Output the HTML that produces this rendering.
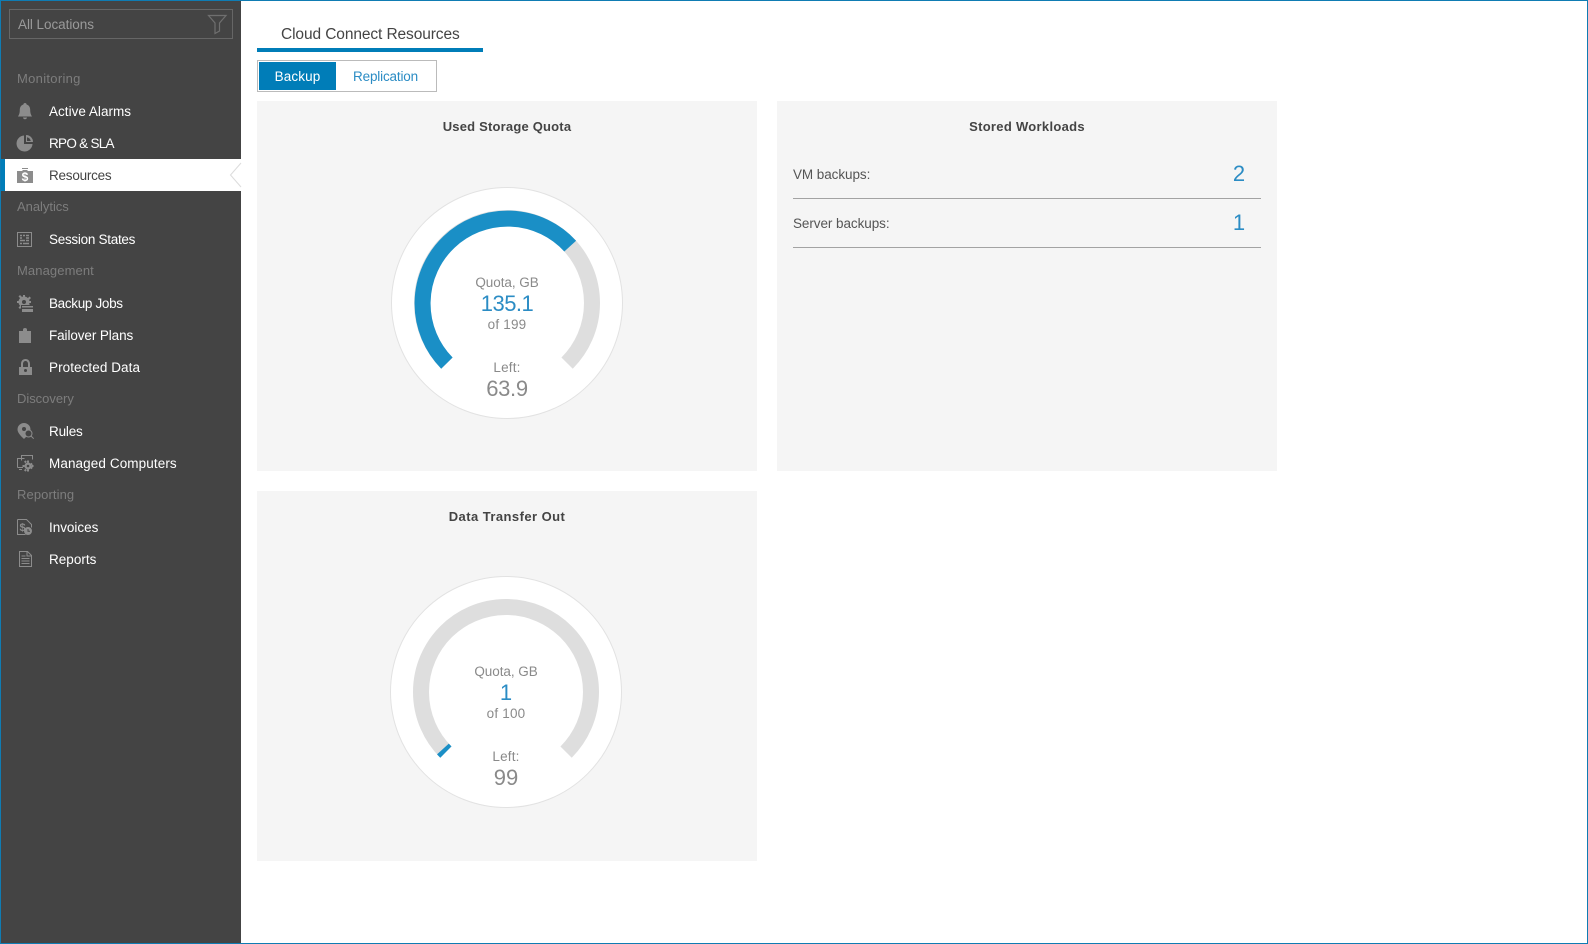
<!DOCTYPE html>
<html><head><meta charset="utf-8"><title>Cloud Connect Resources</title>
<style>
html,body{margin:0;padding:0;background:#fff}
#p{position:relative;width:1588px;height:944px;overflow:hidden;background:#fff;font-family:"Liberation Sans",sans-serif}
#p div{position:absolute;box-sizing:border-box}
.t{white-space:nowrap;line-height:20px;height:20px}
.n{left:49px;color:#fff;font-size:13.5px}
.h{left:17px;color:#7d7d7d;font-size:13px;font-weight:400}
.c{text-align:center;color:#8a8a8a;width:200px}
.b{text-align:center;width:500px;font-weight:700;font-size:13px;color:#444}
.pn{background:#f5f5f5;width:500px;height:370px}
.l{font-size:13.5px;color:#555;left:793px}
.v{font-size:22px;color:#2b8cc4;width:40px;text-align:center;left:1219px}
.r{left:793px;width:468px;height:1px;background:#a3a3a3}
svg{position:absolute;left:0;top:0}
</style></head><body>
<div id="p">
<div style="left:1px;top:1px;width:240px;height:942px;background:#444"></div>
<div style="left:9px;top:9px;width:224px;height:30px;border:1px solid #666"></div>
<div class="t" style="left:18px;top:15px;font-size:13.5px;color:#9a9a9a;letter-spacing:-.05px">All Locations</div>
<div style="left:5px;top:159px;width:236px;height:32px;background:#fff"></div>
<div style="left:0;top:159px;width:5px;height:32px;background:#007db8"></div>

<div class="pn" style="left:257px;top:101px"></div>
<div class="pn" style="left:777px;top:101px"></div>
<div class="pn" style="left:257px;top:491px"></div>

<div class="t h" style="top:69px;letter-spacing:.3px">Monitoring</div>
<div class="t n" style="top:102px;letter-spacing:.02px">Active Alarms</div>
<div class="t n" style="top:134px;letter-spacing:-.72px">RPO &amp; SLA</div>
<div class="t n" style="top:166px;color:#444;letter-spacing:-.23px">Resources</div>
<div class="t h" style="top:197px;letter-spacing:-.03px">Analytics</div>
<div class="t n" style="top:230px;letter-spacing:-.28px">Session States</div>
<div class="t h" style="top:261px;letter-spacing:.1px">Management</div>
<div class="t n" style="top:294px;letter-spacing:-.33px">Backup Jobs</div>
<div class="t n" style="top:326px;letter-spacing:-.1px">Failover Plans</div>
<div class="t n" style="top:358px;letter-spacing:.07px">Protected Data</div>
<div class="t h" style="top:389px;letter-spacing:-.03px">Discovery</div>
<div class="t n" style="top:422px;letter-spacing:-.18px">Rules</div>
<div class="t n" style="top:454px;letter-spacing:.1px">Managed Computers</div>
<div class="t h" style="top:485px;letter-spacing:.1px">Reporting</div>
<div class="t n" style="top:518px;letter-spacing:-.03px">Invoices</div>
<div class="t n" style="top:550px;letter-spacing:.02px">Reports</div>

<div class="t" style="left:281px;top:25px;font-size:15.5px;color:#444;letter-spacing:-.1px">Cloud Connect Resources</div>
<div style="left:257px;top:48px;width:226px;height:4px;background:#007db8"></div>
<div style="left:257px;top:60px;width:180px;height:32px;border:1px solid #bbb;background:#fff"></div>
<div style="left:259px;top:62px;width:77px;height:28px;background:#007db8"></div>
<div class="t" style="left:259px;top:67px;width:77px;text-align:center;color:#fff;font-size:13.5px;letter-spacing:.1px">Backup</div>
<div class="t" style="left:336px;top:67px;width:99px;text-align:center;color:#2b8cc4;font-size:13.5px;letter-spacing:-.17px">Replication</div>

<div class="t b" style="left:257px;top:117px;letter-spacing:.2px">Used Storage Quota</div>
<div class="t b" style="left:777px;top:117px;letter-spacing:.3px">Stored Workloads</div>
<div class="t b" style="left:257px;top:507px;letter-spacing:.44px">Data Transfer Out</div>

<div class="t l" style="top:165px;letter-spacing:-.07px">VM backups:</div>
<div class="t v" style="top:164px">2</div>
<div class="r" style="top:198px"></div>
<div class="t l" style="top:214px;letter-spacing:-.07px">Server backups:</div>
<div class="t v" style="top:213px">1</div>
<div class="r" style="top:247px"></div>

<svg width="1588" height="944" viewBox="0 0 1588 944" style="z-index:0">
<!-- gauges -->
<circle cx="507" cy="303" r="115.5" fill="#fff" stroke="#e2e2e2"/>
<path d="M446.9 363.1A85 85 0 1 1 567.1 363.1" fill="none" stroke="#dedede" stroke-width="16"/>
<path d="M446.9 363.1A85 85 0 1 1 570.2 246.1" fill="none" stroke="#1a8fc6" stroke-width="16"/>
<circle cx="506" cy="692" r="115.5" fill="#fff" stroke="#e2e2e2"/>
<path d="M445.9 752.1A85 85 0 1 1 566.1 752.1" fill="none" stroke="#dedede" stroke-width="16"/>
<path d="M445.9 752.1A85 85 0 0 1 442.9 749" fill="none" stroke="#1a8fc6" stroke-width="16"/>
<!-- selection notch -->
<path d="M241 163L230.5 175L241 187" fill="#fff" stroke="#dcdcdc" stroke-width="1"/>
<!-- filter -->
<path d="M208.5 15.5H226L219.500 23V31L215 33.500V23Z" fill="none" stroke="#6f6f6f" stroke-width="1.2"/>
<g fill="#8c8c8c">
<!-- bell -->
<path d="M25 103c1 0 1.600.7 1.600 1.500 2.600.8 3.600 3 3.600 5.500 0 3.500 1 5 1.800 6.500H18c.8-1.500 1.800-3 1.800-6.500 0-2.500 1-4.700 3.600-5.500 0-.8.600-1.500 1.600-1.500zM23 117.500h4c0 1-.9 1.700-2 1.700s-2-.7-2-1.700z"/>
<!-- pie -->
<path d="M24 136a8 8 0 1 0 8.500 8.500H24z" transform="translate(0 -.5)"/>
<path d="M26 135a7 7 0 0 1 7 7h-7z"/>
<path d="M27 137.200a5 5 0 0 1 3.800 3.800h-3.800z" fill="#444"/>
<!-- bag -->
<path d="M22 168h6v1h-6zM23 170h4l1 1h5v12H17v-12h5z"/>
<!-- clipboard -->
<path d="M19 331h4v-1.500c0-.9 1-1.500 2-1.500s2 .6 2 1.500V331h4v12H19z"/>
<!-- lock -->
<path d="M19 367h2v-3c0-3 1.800-5 4.500-5s4.500 2 4.500 5v3h2v8H19zM23 367h5v-3c0-1.700-1-3-2.500-3S23 362.300 23 364z" fill-rule="evenodd"/>
<circle cx="25.500" cy="370.500" r="1.500" fill="#444"/>
<!-- pin -->
<path d="M24 423a6.500 6.500 0 0 1 6.500 6.500c0 3.500-4 7-6.500 9.500-2.500-2.500-6.500-6-6.500-9.500A6.500 6.500 0 0 1 24 423z"/>
<circle cx="24" cy="429" r="2" fill="#444"/>
<circle cx="28.500" cy="433.500" r="3.500" fill="#444" stroke="#8c8c8c"/>
<path d="M31 436l2.700 2.700" stroke="#8c8c8c" fill="none"/>
<!-- gear box -->
<circle cx="24" cy="302" r="5.500"/>
<path d="M23 295h2v3h-2zM23 306h2v3h-2zM17 301h3v2h-3zM28 301h3v2h-3zM18.500 296.500l1.500-1.500 2 2-1.500 1.500zM27.500 305.500l1.500-1.500 2 2-1.500 1.500zM18.500 307.500l2-2 1.500 1.500-2 2zM27.500 298.500l2-2 1.500 1.500-2 2z"/>
<circle cx="24" cy="302" r="2" fill="#444"/>
<path d="M21 305h12v7H21z" fill="#444"/>
<path d="M22 306h11v1.500H22zM22 309h11v3H22z"/>
<!-- computer gear -->
<circle cx="28" cy="466" r="3.500"/>
<path d="M27 460.500h2v2h-2zM27 469.500h2v2h-2zM22.500 465h2v2h-2zM31.500 465h2v2h-2zM24 461.800l1.400-1.400 1.400 1.400-1.400 1.400zM30 467.800l1.400-1.400 1.400 1.400-1.400 1.400zM24 470.200l1.400 1.400 1.400-1.400-1.400-1.400zM30 464.200l1.400 1.400 1.400-1.400-1.400-1.400z"/>
<circle cx="28" cy="466" r="1.300" fill="#444"/>
<path d="M19 469h3v1h-3z"/>
<!-- invoice clock -->
<circle cx="28" cy="531" r="4"/>
</g>
<text x="22.500" y="181" text-anchor="middle" fill="#fff" font-family="Liberation Sans" font-weight="700" font-size="12" transform="translate(2.500 0)">$</text>
<text x="22.500" y="531" text-anchor="middle" fill="#8c8c8c" font-family="Liberation Sans" font-weight="700" font-size="11">$</text>
<g fill="none" stroke="#8c8c8c" stroke-width="1">
<!-- grid -->
<rect x="17.500" y="232.500" width="14" height="14"/>
<path d="M20 235.500h2M23 235.500h2M26 235.500h3M20 238h2M26 238h3M20 240.500h5M26 240.500h3M20 243.500h2M23 243.500h6" stroke-width="1.600"/>
<!-- computer -->
<path d="M21.500 460.500v-5h11v4M17.500 467.500v-9h7M17.500 467.500H23"/>
<!-- invoice -->
<path d="M17.500 519.500h9l5 5v3M17.500 519.500v15h8"/>
<!-- report -->
<path d="M19.500 551.500h8l4 4v11h-12zM27 551.500v4.500h4.500"/>
<path d="M21.500 556h4M21.500 558.500h8M21.500 561h8M21.500 563.500h8" stroke-width="1.100"/>
</g>
<path d="M28 529v2.300h2" fill="none" stroke="#444"/>
</svg>

<div class="t c" style="left:407px;top:273px;font-size:13.5px;letter-spacing:-.05px;z-index:2">Quota, GB</div>
<div class="t c" style="left:407px;top:294px;font-size:22px;letter-spacing:-.5px;color:#2b8cc4;z-index:2">135.1</div>
<div class="t c" style="left:407px;top:315px;font-size:13.5px;letter-spacing:.2px;z-index:2">of 199</div>
<div class="t c" style="left:407px;top:358px;font-size:13.5px;letter-spacing:.2px;z-index:2">Left:</div>
<div class="t c" style="left:407px;top:379px;font-size:22px;letter-spacing:-.3px;z-index:2">63.9</div>
<div class="t c" style="left:406px;top:662px;font-size:13.5px;letter-spacing:-.05px;z-index:2">Quota, GB</div>
<div class="t c" style="left:406px;top:683px;font-size:22px;color:#2b8cc4;z-index:2">1</div>
<div class="t c" style="left:406px;top:704px;font-size:13.5px;letter-spacing:.2px;z-index:2">of 100</div>
<div class="t c" style="left:406px;top:747px;font-size:13.5px;letter-spacing:.2px;z-index:2">Left:</div>
<div class="t c" style="left:406px;top:768px;font-size:22px;z-index:2">99</div>

<div style="left:0;top:0;width:1588px;height:944px;border:1px solid #0f7cb3;z-index:5"></div>
</div>
</body></html>
